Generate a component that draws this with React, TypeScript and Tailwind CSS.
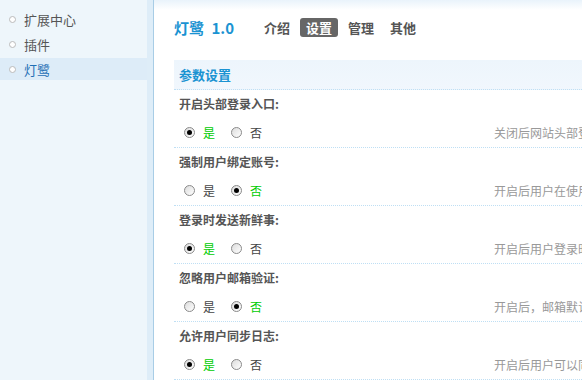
import React from "react";

const menu = [
  { label: "扩展中心", active: false },
  { label: "插件", active: false },
  { label: "灯鹭", active: true },
];

const tabs = ["介绍", "设置", "管理", "其他"];

const settings = [
  { label: "开启头部登录入口", on: true, desc: "关闭后网站头部登录入口将被隐藏" },
  { label: "强制用户绑定账号", on: false, desc: "开启后用户在使用第三方登录时必须绑定" },
  { label: "登录时发送新鲜事", on: true, desc: "开启后用户登录时自动发送一条新鲜事" },
  { label: "忽略用户邮箱验证", on: false, desc: "开启后，邮箱默认为已验证状态" },
  { label: "允许用户同步日志", on: true, desc: "开启后用户可以同步日志到微博" },
];

function Radio({ checked, text }: { checked: boolean; text: string }) {
  return (
    <label className="flex items-center">
      <span className="flex h-[11px] w-[11px] items-center justify-center rounded-full border border-[#8a8a8a] bg-gradient-to-br from-[#dcdcdc] to-white">
        {checked && <span className="h-[5px] w-[5px] rounded-full bg-black" />}
      </span>
      <span className={"ml-[8px] " + (checked ? "text-[#00cc00]" : "text-[#444]")}>{text}</span>
    </label>
  );
}

export default function App() {
  return (
    <div
      className="flex h-[380px] w-[582px] overflow-hidden bg-white text-[12px] leading-none"
      style={{ fontFamily: '"Noto Sans CJK SC", "Liberation Sans", sans-serif' }}
    >
      <aside className="flex w-[147px] shrink-0 flex-col gap-[3px] bg-[#eef6fb] pt-[8px]">
        {menu.map((m) => (
          <div
            key={m.label}
            className={"flex h-[22px] items-center pl-[9px] " + (m.active ? "bg-[#ddecf8] text-[#1f6fb5]" : "text-[#555]")}
          >
            <span className="h-[7px] w-[7px] rounded-full border border-[#bbb] bg-white" />
            <span className="ml-[8px] text-[13px]">{m.label}</span>
          </div>
        ))}
      </aside>
      <div className="w-[6px] shrink-0 bg-[#deedf8]" />
      <div className="w-[1px] shrink-0 bg-[#a8cde6]" />

      <main className="flex min-w-0 flex-1 flex-col bg-gradient-to-b from-[#e9f3fb] from-0% to-white to-[10px] pl-[20px]">
        <div className="flex h-[52px] items-center pt-[2px]">
          <h1 className="w-[84px] text-[15px] font-bold text-[#1a93d2]">
            灯鹭 <span className="ml-[4px]">1.0</span>
          </h1>
          <nav className="flex items-center gap-[4px] text-[13px] font-bold text-[#555]">
            {tabs.map((t) => (
              <span
                key={t}
                className={
                  "rounded-[3px] px-[6px] py-[3px] " + (t === "设置" ? "bg-[#666] text-white" : "")
                }
              >
                {t}
              </span>
            ))}
          </nav>
        </div>

        <div className="w-[700px]">
          <div className="mt-[8px] flex h-[30px] items-center border-b border-dotted border-[#bfdff4] bg-gradient-to-b from-[#edf5fc] to-[#f1f7fd] pl-[5px] text-[13px] font-bold text-[#1a93d2]">
            参数设置
          </div>

          {settings.map((s) => (
            <div key={s.label} className="h-[58px] border-b border-dotted border-[#bfdff4] pl-[5px]">
              <div className="flex h-[28px] items-center font-bold text-[#555]">{s.label}:</div>
              <div className="flex h-[29px] items-center">
                <div className="flex w-[315px] items-center gap-[16px] pl-[5px]">
                  <Radio checked={s.on} text="是" />
                  <Radio checked={!s.on} text="否" />
                </div>
                <span className="whitespace-nowrap text-[#999]">{s.desc}</span>
              </div>
            </div>
          ))}
        </div>
      </main>
    </div>
  );
}
